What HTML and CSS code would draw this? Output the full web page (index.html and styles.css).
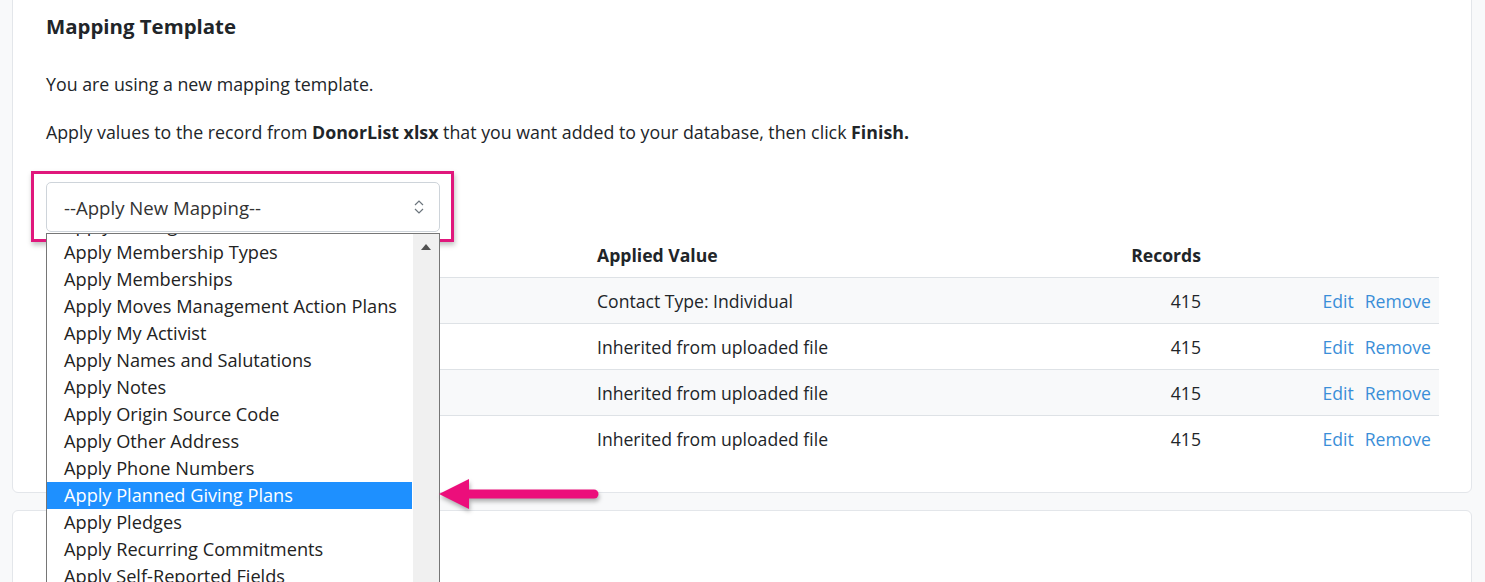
FILE: index.html
```html
<!DOCTYPE html>
<html lang="en">
<head>
    <meta charset="UTF-8">
    <meta name="viewport" content="width=device-width, initial-scale=1.0">
    <title>Mapping Template</title>
    <link rel="stylesheet" href="styles.css">
</head>
<body>
    <div class="page">
        <div class="card">
            <h2>Mapping Template</h2>
            <p>You are using a new mapping template.</p>
            <p>Apply values to the record from <strong>DonorList xlsx</strong> that you want added to your database, then click <strong>Finish.</strong></p>

            <div class="mapping">
                <div class="select">
                    <span>--Apply New Mapping--</span>
                    <svg class="chevron" width="12" height="18" viewBox="0 0 12 18">
                        <path d="M2 7 L6 3 L10 7 M2 11 L6 15 L10 11" fill="none" stroke="#6c757d" stroke-width="1.2"/>
                    </svg>
                </div>
                <div class="highlight"></div>

                <div class="options">
                    <ul>
                        <li>Apply Mailings</li>
                        <li>Apply Membership Types</li>
                        <li>Apply Memberships</li>
                        <li>Apply Moves Management Action Plans</li>
                        <li>Apply My Activist</li>
                        <li>Apply Names and Salutations</li>
                        <li>Apply Notes</li>
                        <li>Apply Origin Source Code</li>
                        <li>Apply Other Address</li>
                        <li>Apply Phone Numbers</li>
                        <li class="active">Apply Planned Giving Plans</li>
                        <li>Apply Pledges</li>
                        <li>Apply Recurring Commitments</li>
                        <li>Apply Self-Reported Fields</li>
                    </ul>
                    <div class="scrollbar"><span class="up"></span></div>
                </div>

                <svg class="arrow" width="170" height="44" viewBox="0 0 170 44">
                    <path d="M32 22 L158 22" stroke="#ec0e7b" stroke-width="9" stroke-linecap="round"/>
                    <path d="M3 22 L33 7 L33 37 Z" fill="#ec0e7b"/>
                </svg>
            </div>

            <table>
                <thead>
                    <tr>
                        <th class="field">Mapping</th>
                        <th class="value">Applied Value</th>
                        <th class="num">Records</th>
                        <th class="actions"></th>
                    </tr>
                </thead>
                <tbody>
                    <tr>
                        <td>Contact Type</td>
                        <td>Contact Type: Individual</td>
                        <td class="num">415</td>
                        <td class="actions"><a href="#">Edit</a><a href="#">Remove</a></td>
                    </tr>
                    <tr>
                        <td>First Name</td>
                        <td>Inherited from uploaded file</td>
                        <td class="num">415</td>
                        <td class="actions"><a href="#">Edit</a><a href="#">Remove</a></td>
                    </tr>
                    <tr>
                        <td>Last Name</td>
                        <td>Inherited from uploaded file</td>
                        <td class="num">415</td>
                        <td class="actions"><a href="#">Edit</a><a href="#">Remove</a></td>
                    </tr>
                    <tr>
                        <td>Email</td>
                        <td>Inherited from uploaded file</td>
                        <td class="num">415</td>
                        <td class="actions"><a href="#">Edit</a><a href="#">Remove</a></td>
                    </tr>
                </tbody>
            </table>
        </div>

        <div class="card card-next"></div>
    </div>
</body>
</html>
```

FILE: styles.css
```css
body {
    margin: 0;
    background-color: #f8f9fa;
    font-family: "Open Sans", "Noto Sans", sans-serif;
    color: #212529;
    font-size: 17.8px;
    overflow: hidden;
}
.page {
    padding: 0 13px 0 12px;
}
.card {
    background: white;
    border: 1px solid #e3e6ea;
    border-radius: 6px;
    margin-top: -10px;
    padding: 20px 33px 31px;
}
.card-next {
    margin-top: 17px;
    height: 120px;
}
h2 {
    font-size: 20.4px;
    font-weight: 700;
    margin: 0 0 31px;
    line-height: 30px;
}
p {
    margin: 0 0 23px;
    line-height: 25px;
}
.mapping {
    position: relative;
    padding-top: 14px;
    width: 394px;
}
.select {
    box-sizing: border-box;
    display: flex;
    align-items: center;
    justify-content: space-between;
    height: 50px;
    border: 1px solid #ced4da;
    border-radius: 5px;
    padding: 0 14px 0 17px;
    font-size: 18.6px;
    color: #333;
}
.highlight {
    position: absolute;
    left: -15px;
    top: 3px;
    width: 417px;
    height: 65px;
    border: 3px solid #e0177c;
    box-shadow: 1px 3px 5px rgba(0, 0, 0, 0.25);
    pointer-events: none;
}
.options {
    position: absolute;
    left: 0;
    top: 65px;
    width: 392px;
    height: 360px;
    border: 1px solid #767676;
    background: white;
    overflow: hidden;
    z-index: 2;
}
.options ul {
    list-style: none;
    margin: -22px 27px 0 0;
    padding: 0;
}
.options li {
    height: 27px;
    line-height: 27px;
    padding-left: 17px;
    font-size: 18.2px;
    color: #222;
    white-space: nowrap;
}
.options li.active {
    background-color: #1e90ff;
    color: white;
}
.scrollbar {
    position: absolute;
    top: 0;
    right: 0;
    width: 26px;
    height: 100%;
    background: #f0f0f0;
}
.scrollbar .up {
    position: absolute;
    left: 8px;
    top: 10px;
    border-left: 5px solid transparent;
    border-right: 5px solid transparent;
    border-bottom: 6px solid #505050;
}
.arrow {
    position: absolute;
    left: 390px;
    top: 304px;
    z-index: 3;
    filter: drop-shadow(1px 3px 2px rgba(0, 0, 0, 0.3));
}
table {
    width: 1393px;
    border-collapse: collapse;
    table-layout: fixed;
    font-size: 17.6px;
}
th, td {
    height: 45px;
    padding: 0 8px;
    text-align: left;
    border-top: 1px solid #dee2e6;
    white-space: nowrap;
}
th {
    font-weight: 700;
    border-top: none;
}
.field {
    width: 527px;
}
.value {
    width: 404px;
}
.num {
    text-align: right;
    width: 184px;
}
.actions {
    text-align: right;
    width: 214px;
}
tbody tr:nth-child(odd) {
    background-color: #f8f9fa;
}
.actions a {
    color: #3a8ed8;
    text-decoration: none;
    margin-left: 11px;
}
```
